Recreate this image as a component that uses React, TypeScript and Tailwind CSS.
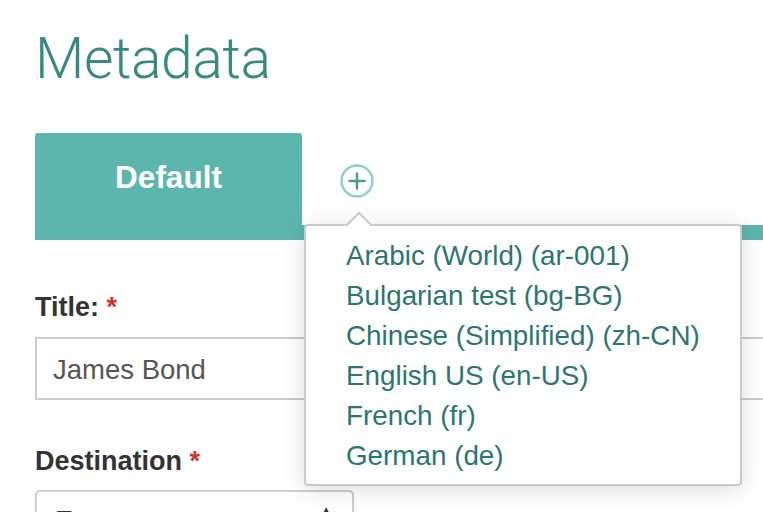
import React from 'react';

const languages = [
  'Arabic (World) (ar-001)',
  'Bulgarian test (bg-BG)',
  'Chinese (Simplified) (zh-CN)',
  'English US (en-US)',
  'French (fr)',
  'German (de)',
];

function PlusCircle() {
  return (
    <svg width="36" height="36" viewBox="0 0 36 36" fill="none">
      <circle cx="18" cy="18" r="15.5" stroke="#8fd0c9" strokeWidth="2.5" />
      <path d="M18 10.5v15M10.5 18h15" stroke="#4d9c94" strokeWidth="2.5" strokeLinecap="round" />
    </svg>
  );
}

export default function App() {
  return (
    <div className="relative w-[763px] h-[512px] overflow-hidden bg-white font-['Liberation_Sans',Arial,sans-serif]">
      <div className="pl-[35px]">
        {/* heading */}
        <h1 className="pt-[25px] h-[133px] font-['Roboto',sans-serif] font-light text-[57px] leading-[68px] tracking-[-0.4px] text-[#378a80]">
          Metadata
        </h1>

        {/* tabs */}
        <div className="flex flex-col">
          <div className="flex items-start h-[92px]">
            <div className="w-[267px] h-[92px] rounded-t-[3px] bg-[#5db6ae] flex items-center justify-center text-white font-bold text-[31.5px] pb-[2px]">
              Default
            </div>
            <button className="ml-[37px] mt-[30px]">
              <PlusCircle />
            </button>
          </div>
          <div className="h-[15px] bg-[#5db6ae]" />
        </div>

        {/* form */}
        <div className="pt-[52px]">
          <label className="block text-[27px] font-bold leading-[30px] text-[#333]">
            Title: <span className="text-[#d5302a]">*</span>
          </label>
          <div className="mt-[15px] w-[760px] h-[63px] border-2 border-[#cccccc] flex items-center pl-[16px] pt-[3px] text-[27.5px] text-[#555]">
            James Bond
          </div>
          <label className="block mt-[46px] text-[27px] font-bold leading-[30px] text-[#333]">
            Destination <span className="text-[#d5302a]">*</span>
          </label>
          <div className="mt-[14px] w-[319px] h-[60px] border-2 border-[#cfcfcf] rounded-[5px] flex justify-between pl-[18px] pr-[16px] pt-[14px] text-[27px] leading-[31px] text-[#333] shadow-[0_1px_2px_rgba(0,0,0,0.08)]">
            <span>Europe</span>
            <span className="text-[20px] leading-[20px] -mt-[4px]">▲</span>
          </div>
        </div>
      </div>

      {/* language menu */}
      <div className="absolute left-[304px] top-[224px] w-[438px] h-[262px] bg-white border-2 border-[#c9c9c9] rounded-[4px] shadow-[0_4px_24px_rgba(0,0,0,0.14)]">
        <div className="absolute left-[37px] -top-[18px] w-[32px] h-[18px] overflow-hidden">
          <div className="absolute left-[5px] top-[8px] w-[22px] h-[22px] rotate-45 bg-white border-2 border-[#c9c9c9]" />
        </div>
        <ul className="pt-[10px] pl-[40px]">
          {languages.map((l) => (
            <li key={l} className="h-[40px] leading-[40px] text-[27.8px] text-[#2b776f] whitespace-nowrap">
              {l}
            </li>
          ))}
        </ul>
      </div>
    </div>
  );
}
